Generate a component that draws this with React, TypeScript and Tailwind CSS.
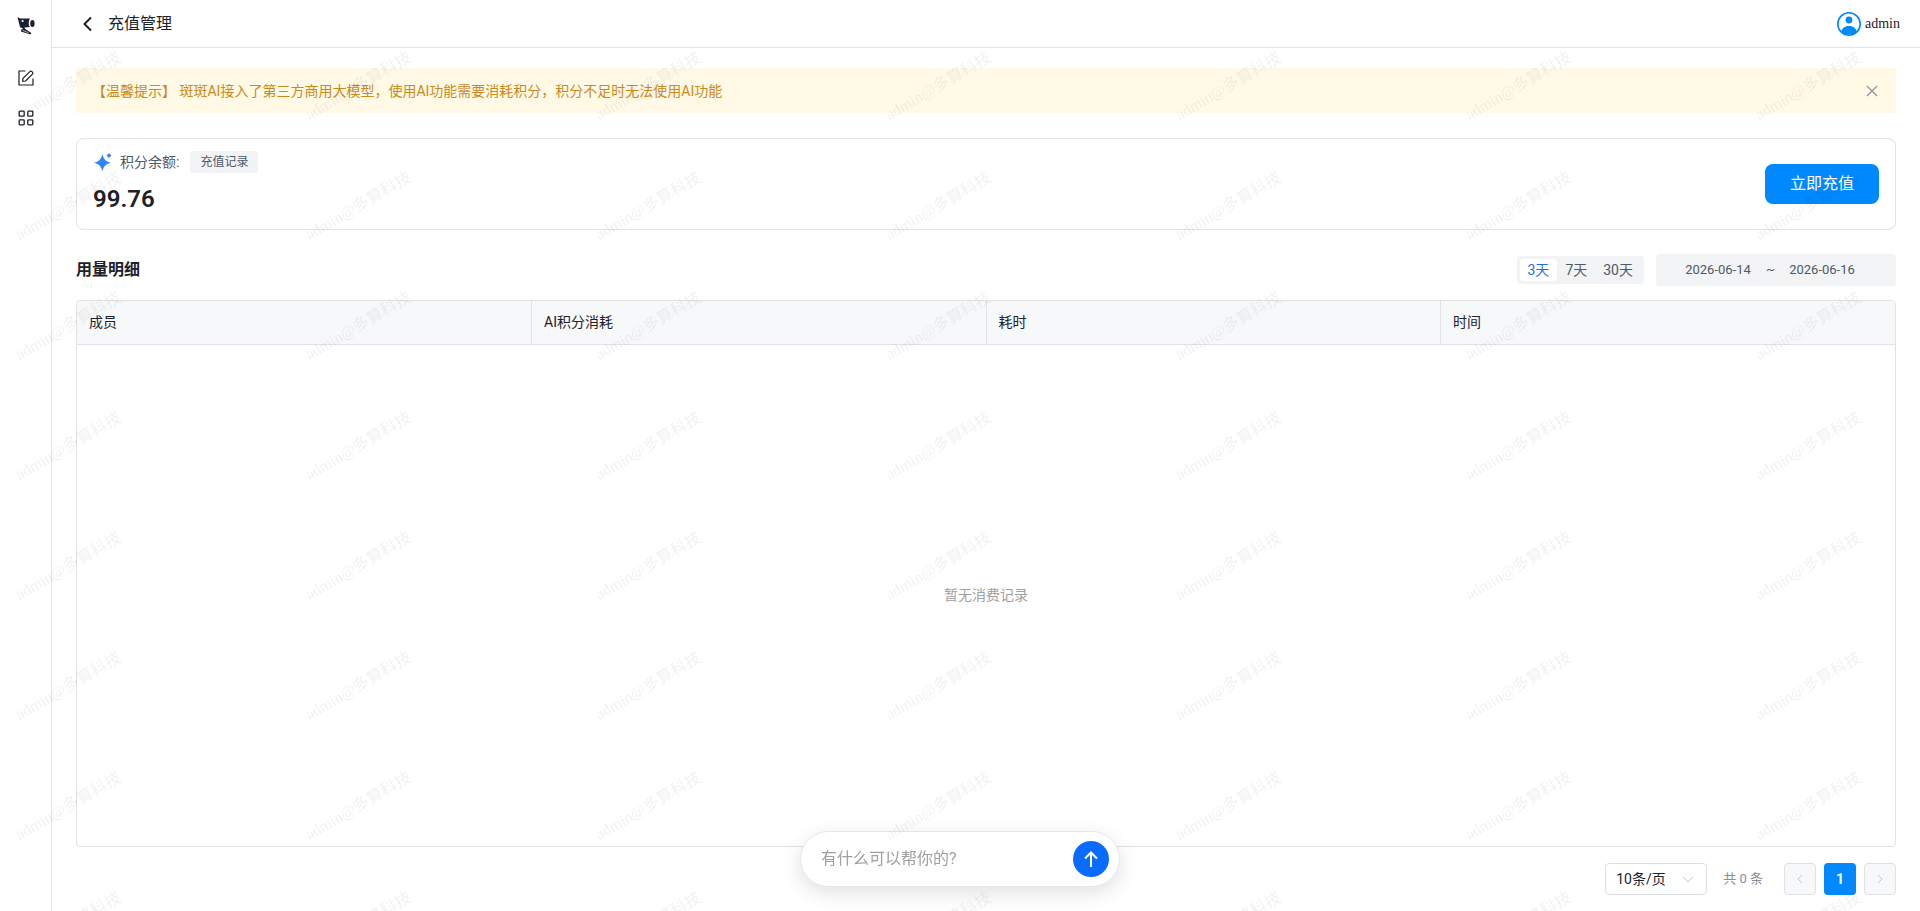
import { useState } from "react";

const columns = ["成员", "AI积分消耗", "耗时", "时间"];

const ranges = [
    { label: "3天", value: "3" },
    { label: "7天", value: "7" },
    { label: "30天", value: "30" },
];

const Logo = () => (
    <svg viewBox="0 0 20 20" className="w-5 h-5" fill="#1a2130">
        <path d="M1.500 1L4.200 2.500H14C12.300 5 12.300 9 13.800 11L8.500 11.600L9.200 13L15.400 17L14.400 18.600L5 15.600V13.800L7.200 12.600L4 11.200Z" />
        <path d="M6.500 14.200L12.600 16.800" stroke="#fff" strokeWidth="0.6" />
        <ellipse cx="16.400" cy="7.400" rx="2.200" ry="3.500" />
        <circle cx="6.600" cy="5" r="1.100" fill="#fff" />
    </svg>
);

const EditIcon = () => (
    <svg viewBox="0 0 16 16" className="w-4 h-4" fill="none" stroke="#1d2129" strokeWidth="1.2">
        <path d="M7.5 1H1v14h14V8.5" />
        <path d="M4.7 11.3l.3-2.9 6.8-6.8c.6-.6 1.5-.6 2.1 0l.5.5c.6.6.6 1.5 0 2.1L7.6 11z" strokeLinejoin="round" />
    </svg>
);

const AppsIcon = () => (
    <svg viewBox="0 0 16 16" className="w-4 h-4" fill="none" stroke="#1d2129" strokeWidth="1.3">
        <rect x="1.2" y="1.2" width="5" height="5" rx="0.8" />
        <rect x="9.8" y="1.2" width="5" height="5" rx="0.8" />
        <rect x="1.2" y="9.8" width="5" height="5" rx="0.8" />
        <rect x="9.8" y="9.8" width="5" height="5" rx="0.8" />
    </svg>
);

const SparkIcon = () => (
    <svg viewBox="0 0 20 20" className="w-5 h-5 shrink-0" fill="#2f86f6">
        <path d="M9.400 2C10.600 7 12.400 9.400 18 10.800C12.400 12.200 10.600 14.600 9.400 19.600C8.200 14.600 6.400 12.200 .8 10.800C6.400 9.400 8.200 7 9.400 2Z" />
        <path d="M16 1.200L18.400 3.600L16 6L13.600 3.600Z" />
    </svg>
);

const Avatar = () => (
    <svg viewBox="0 0 24 24" className="w-6 h-6">
        <circle cx="12" cy="12" r="11.2" fill="#fff" stroke="#0089ff" strokeWidth="1.6" />
        <circle cx="12" cy="8" r="3.4" fill="#0089ff" />
        <path d="M4.2 19.4C5.4 15.6 8.4 14 12 14s6.600 1.600 7.800 5.400A11 11 0 0 1 4.200 19.400Z" fill="#0089ff" />
    </svg>
);

const Watermark = () => (
    <div aria-hidden="true" className="fixed inset-0 z-50 overflow-hidden pointer-events-none select-none">
        <div className="grid grid-cols-[repeat(7,290px)] auto-rows-[120px]">
            {Array.from({ length: 56 }, (_, i) => (
                <div key={i} className="pl-[9px] pt-[76px]">
                    <span className="inline-block -rotate-30 whitespace-nowrap text-base leading-5 text-black/6 font-['Liberation_Serif','Noto_Sans_CJK_SC',serif]">
                        admin@多算科技
                    </span>
                </div>
            ))}
        </div>
    </div>
);

const App = () => {
    const [range, setRange] = useState("3");
    const [showTip, setShowTip] = useState(true);

    return (
        <div className="flex min-h-screen bg-white text-sm text-[#1d2129] font-['Roboto','Noto_Sans_CJK_SC',sans-serif]">
            <aside className="w-[52px] shrink-0 border-r border-[#e0e2e6] flex flex-col items-center pt-4">
                <a href="#home" aria-label="首页"><Logo /></a>
                <nav className="flex flex-col items-center gap-6 mt-[34px]">
                    <a href="#edit" aria-label="编辑"><EditIcon /></a>
                    <a href="#apps" aria-label="应用"><AppsIcon /></a>
                </nav>
            </aside>

            <div className="flex-1 min-w-0 flex flex-col">
                <header className="h-12 shrink-0 border-b border-[#e0e2e6] flex items-center justify-between pl-7 pr-5">
                    <div className="flex items-center gap-4">
                        <button aria-label="返回" className="w-3 h-4">
                            <svg viewBox="0 0 12 16" className="w-3 h-4" fill="none" stroke="#1d2129" strokeWidth="2">
                                <path d="M11 1.500L4.500 8l6.500 6.500" />
                            </svg>
                        </button>
                        <h1 className="text-base leading-6">充值管理</h1>
                    </div>
                    <div className="flex items-center gap-1">
                        <Avatar />
                        <span className="font-['Liberation_Serif',serif]">admin</span>
                    </div>
                </header>

                <main className="flex-1 flex flex-col px-6 pt-5 pb-4">
                    {showTip && (
                        <div className="h-[45px] mb-[25px] flex items-center justify-between bg-[#fff9e6] px-4 text-[#c98a1b]">
                            <p>【温馨提示】 斑斑AI接入了第三方商用大模型，使用AI功能需要消耗积分，积分不足时无法使用AI功能</p>
                            <button aria-label="关闭" onClick={() => setShowTip(false)}>
                                <svg viewBox="0 0 16 16" className="w-4 h-4" fill="none" stroke="#8a8f99" strokeWidth="1.1">
                                    <path d="M3 3l10 10M13 3L3 13" />
                                </svg>
                            </button>
                        </div>
                    )}

                    <section className="h-[92px] flex items-center justify-between border border-[#e0e2e6] rounded-lg px-4">
                        <div className="flex flex-col gap-2">
                            <div className="flex items-center gap-[7px] text-[#4e5969]">
                                <SparkIcon />
                                <span className="leading-5">积分余额:</span>
                                <button className="ml-1 h-[22px] px-[10px] rounded bg-[#f2f3f5] text-xs">充值记录</button>
                            </div>
                            <strong className="text-2xl leading-9 font-semibold">99.76</strong>
                        </div>
                        <button className="h-10 px-[25px] rounded-lg bg-[#0089ff] text-base text-white">立即充值</button>
                    </section>

                    <div className="flex items-center justify-between mt-6 mb-[14px] h-8">
                        <h2 className="text-base font-bold">用量明细</h2>
                        <div className="flex items-center gap-3">
                            <fieldset className="flex h-7 p-[3px] rounded bg-[#f2f3f5]">
                                {ranges.map((item) => (
                                    <label
                                        key={item.value}
                                        className={`flex items-center px-2 rounded-sm cursor-pointer ${
                                            range === item.value ? "bg-white text-[#1d6fdc]" : "text-[#4e5969]"
                                        }`}
                                    >
                                        <input
                                            type="radio"
                                            name="range"
                                            value={item.value}
                                            checked={range === item.value}
                                            onChange={() => setRange(item.value)}
                                            className="sr-only"
                                        />
                                        {item.label}
                                    </label>
                                ))}
                            </fieldset>
                            <div className="w-60 h-8 flex items-center rounded bg-[#f2f3f5] pl-[14px] pr-[26px] text-[13px] text-[#4e5969]">
                                <input aria-label="开始日期" defaultValue="2026-06-14" className="flex-1 min-w-0 text-center bg-transparent outline-none" />
                                <span className="w-2 text-center">~</span>
                                <input aria-label="结束日期" defaultValue="2026-06-16" className="flex-1 min-w-0 text-center bg-transparent outline-none" />
                            </div>
                        </div>
                    </div>

                    <div className="flex-1 flex flex-col border border-[#e0e2e6] rounded overflow-hidden">
                        <table className="w-full table-fixed">
                            <thead>
                                <tr className="h-[43px] bg-[#f6f8fa] border-b border-[#e0e2e6]">
                                    {columns.map((name) => (
                                        <th key={name} className="px-3 text-left font-normal border-r border-[#e0e2e6] last:border-r-0">
                                            {name}
                                        </th>
                                    ))}
                                </tr>
                            </thead>
                        </table>
                        <div className="flex-1 flex items-center justify-center text-[#a0a0a0]">暂无消费记录</div>
                    </div>

                    <footer className="flex items-center justify-end mt-4">
                        <div className="relative">
                            <select aria-label="每页条数" className="appearance-none w-[102px] h-8 pl-[10px] pr-8 border border-[#dcdfe6] rounded bg-white">
                                <option>10条/页</option>
                                <option>20条/页</option>
                                <option>50条/页</option>
                            </select>
                            <svg viewBox="0 0 14 14" className="absolute right-3 top-[9px] w-[14px] h-[14px] pointer-events-none" fill="none" stroke="#c0c4cc">
                                <path d="M2 5l5 5 5-5" />
                            </svg>
                        </div>
                        <span className="ml-4 mr-[21px] text-[13px] text-[#86909c]">共 0 条</span>
                        <div className="flex gap-2">
                            <button disabled aria-label="上一页" className="w-8 h-8 flex items-center justify-center border border-[#dfe1e6] rounded bg-[#f7f8fa]">
                                <svg viewBox="0 0 12 12" className="w-3 h-3" fill="none" stroke="#c0c4cc">
                                    <path d="M8 2L4 6l4 4" />
                                </svg>
                            </button>
                            <button className="w-8 h-8 rounded bg-[#0089ff] text-white font-bold">1</button>
                            <button disabled aria-label="下一页" className="w-8 h-8 flex items-center justify-center border border-[#dfe1e6] rounded bg-[#f7f8fa]">
                                <svg viewBox="0 0 12 12" className="w-3 h-3" fill="none" stroke="#c0c4cc">
                                    <path d="M4 2l4 4-4 4" />
                                </svg>
                            </button>
                        </div>
                    </footer>
                </main>
            </div>

            {/* Floating assistant box */}
            <form
                onSubmit={(e) => e.preventDefault()}
                className="fixed left-1/2 bottom-6 -translate-x-1/2 w-80 h-14 flex items-center pl-5 pr-[10px] border border-[#e4e6eb] rounded-full bg-white shadow-[0_6px_20px_rgba(0,0,0,0.12)]"
            >
                <input
                    aria-label="有什么可以帮你的?"
                    placeholder="有什么可以帮你的?"
                    className="flex-1 min-w-0 text-base outline-none placeholder:text-[#a0a0a0]"
                />
                <button aria-label="发送" className="w-9 h-9 shrink-0 rounded-full bg-[#0a6cff] flex items-center justify-center">
                    <svg viewBox="0 0 18 18" className="w-[18px] h-[18px]" fill="none" stroke="#fff" strokeWidth="2">
                        <path d="M9 17V2.500M3 8.500l6-6 6 6" />
                    </svg>
                </button>
            </form>

            <Watermark />
        </div>
    );
};

export default App;
